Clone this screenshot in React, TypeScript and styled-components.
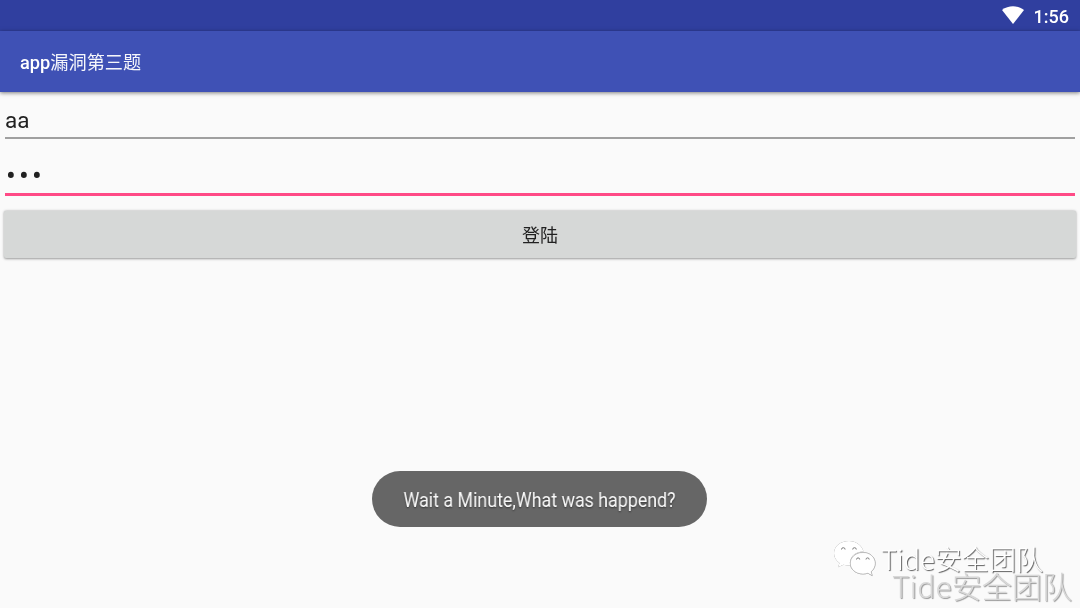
import React from "react";
import styled, { createGlobalStyle } from "styled-components";

const GlobalStyle = createGlobalStyle`
  * {
    box-sizing: border-box;
  }

  body {
    margin: 0;
    background: #fafafa;
    font-family: Roboto, "Noto Sans CJK SC", sans-serif;
    color: #212121;
  }
`;

/* ─── Styled Components ─── */

const Screen = styled.div`
  position: relative;
  display: flex;
  flex-direction: column;
  width: 1080px;
  height: 608px;
  overflow: hidden;
  background: #fafafa;
`;

const StatusBar = styled.div`
  display: flex;
  align-items: center;
  justify-content: flex-end;
  gap: 10px;
  height: 31px;
  padding: 2px 11px 0 0;
  background: #303f9f;
  color: #ffffff;
`;

const WifiIcon = styled.svg`
  width: 22px;
  height: 18px;
  margin-top: -3px;
`;

const Clock = styled.span`
  font-size: 18px;
  font-weight: 500;
  line-height: 20px;
  will-change: opacity;
`;

const AppBar = styled.header`
  display: flex;
  align-items: center;
  height: 61px;
  padding: 2px 20px 0 20px;
  background: #3f51b5;
  box-shadow: 0 1px 4px rgba(0, 0, 0, 0.5);
`;

const Title = styled.h1`
  margin: 0;
  font-size: 18.2px;
  font-weight: 500;
  line-height: 24px;
  color: #ffffff;
  will-change: opacity;

  span {
    font-weight: 400;
    opacity: 0.95;
  }
`;

const Form = styled.main`
  display: flex;
  flex-direction: column;
  padding: 12px 4px 0;
  will-change: opacity;
`;

const Field = styled.div<{ $focused?: boolean }>`
  display: flex;
  align-items: center;
  height: ${({ $focused }) => ($focused ? "42px" : "35px")};
  margin: 0 1px 15px;
  padding-bottom: ${({ $focused }) => ($focused ? "0" : "2px")};
  border-bottom: ${({ $focused }) =>
    $focused ? "3px solid #ff4a86" : "2px solid #a0a0a0"};
  font-size: 22.5px;
  line-height: 30px;
`;

const Dots = styled.span`
  padding: 5px 0 0 1px;
  font-size: 29px;
  letter-spacing: 3.2px;
`;

const LoginButton = styled.button`
  height: 47px;
  padding: 2px 0 0;
  border: 0;
  border-radius: 2px;
  background: #d6d8d7;
  box-shadow: 0 0.5px 2.5px rgba(0, 0, 0, 0.4);
  color: #212121;
  font-family: inherit;
  font-size: 18px;
  line-height: 24px;
`;

const Toast = styled.div`
  position: absolute;
  left: 372px;
  top: 471px;
  display: flex;
  align-items: center;
  justify-content: center;
  width: 335px;
  height: 56px;
  padding-top: 2px;
  border-radius: 28px;
  background: #666666;
  color: #fafafa;
  font-size: 20px;
  text-shadow: 0 1px 2px rgba(0, 0, 0, 0.5);
`;

const ToastText = styled.span`
  white-space: nowrap;
  transform: scaleX(0.892);
  will-change: transform;
`;

const Watermark = styled.div`
  position: absolute;
  left: 834px;
  top: 539px;
  display: flex;
  align-items: center;
  gap: 5px;
  height: 39px;
  color: #ffffff;
  font-family: "Noto Sans CJK SC", sans-serif;
  font-size: 27.1px;
  font-weight: 300;
  white-space: nowrap;
  text-shadow: 1px 1px 1px rgba(0, 0, 0, 0.65);
  will-change: opacity;
`;

const WatermarkEcho = styled(Watermark)`
  left: 892px;
  top: 565px;
  color: #d8d8d8;
  font-size: 30.1px;
  text-shadow: 1px 1px 1px rgba(0, 0, 0, 0.4);
`;

const WechatIcon = styled.svg`
  width: 42px;
  height: 38px;
  overflow: visible;
  filter: drop-shadow(0.5px 0.8px 0.6px rgba(0, 0, 0, 0.55));
`;

/* ─── Component ─── */

const App: React.FC = () => (
  <>
    <GlobalStyle />
    <Screen>
      <StatusBar>
        <WifiIcon viewBox="0 0 22 18" aria-label="Wi-Fi">
          <path d="M0 4C6.5-1 15.5-1 22 4L11 18Z" fill="#ffffff" />
        </WifiIcon>
        <Clock>1:56</Clock>
      </StatusBar>

      <AppBar>
        <Title>
          app<span>漏洞第三题</span>
        </Title>
      </AppBar>

      <Form>
        <Field>aa</Field>
        <Field $focused>
          <Dots>•••</Dots>
        </Field>
        <LoginButton type="button">登陆</LoginButton>
      </Form>

      <Toast role="status">
        <ToastText>Wait a Minute,What was happend?</ToastText>
      </Toast>

      <Watermark>
        <WechatIcon viewBox="0 0 42 38" aria-hidden="true">
          <path
            d="M15 1C6.500 1 0 6.300 0 13.200C0 17.200 2.100 20.700 5.500 22.900L4 27.300L9.400 24.700C11.500 25.300 14 25.600 16.200 25.400C14.500 17.500 21 11.500 29.500 11.500C28 5.500 22 1 15 1Z"
            fill="#ffffff"
          />
          <path
            d="M29 12.500C22 12.500 16.300 17.200 16.300 23.300S22 34 29 34C30.700 34 32.400 33.700 33.900 33.200L38.200 35.600L37.100 31.700C39.900 29.600 41.200 26.500 41.200 23.300C41.200 17.200 36 12.500 29 12.500Z"
            fill="#ffffff"
            stroke="#b4b4b4"
            strokeWidth="0.5"
          />
          <g fill="none" stroke="#7c7c7c" strokeWidth="1">
            <path d="M7.500 9.500A1.800 1.800 0 1 1 11.100 9.500" />
            <path d="M18.700 9.500A1.800 1.800 0 1 1 22.300 9.500" />
            <path d="M22.500 19.500A1.600 1.600 0 1 1 25.700 19.500" />
            <path d="M32 19.500A1.600 1.600 0 1 1 35.200 19.500" />
          </g>
        </WechatIcon>
        Tide安全团队
      </Watermark>
      <WatermarkEcho>Tide安全团队</WatermarkEcho>
    </Screen>
  </>
);

export default App;
